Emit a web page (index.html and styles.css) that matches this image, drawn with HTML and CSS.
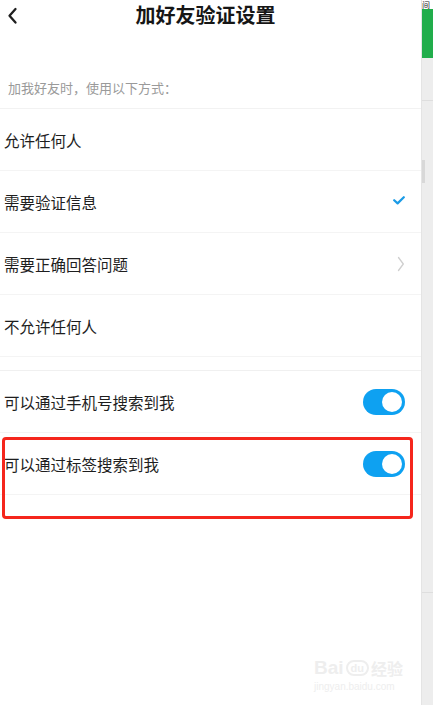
FILE: index.html
```html
<!DOCTYPE html>
<html lang="zh-CN">
<head>
<meta charset="utf-8">
<title>加好友验证设置</title>
<link rel="stylesheet" href="styles.css">
</head>
<body>
<div class="screen">
  <main class="panel">
    <header class="header">
      <span class="back">
        <svg width="12" height="18" viewBox="0 0 12 18"><path d="M8.5 2 L2.5 8.8 L8.5 15.6" fill="none" stroke="#1f1f1f" stroke-width="2.3" stroke-linecap="round" stroke-linejoin="round"/></svg>
      </span>
      <h1 class="title">加好友验证设置</h1>
      <span></span>
    </header>
    <p class="hint">加我好友时，使用以下方式：</p>
    <section class="group">
      <div class="row"><span class="label">允许任何人</span></div>
      <div class="row"><span class="label">需要验证信息</span>
        <svg class="check" width="12" height="9" viewBox="0 0 12 9"><path d="M1.2 4.2 L4.6 7.4 L10.8 1.2" fill="none" stroke="#1b9be6" stroke-width="2.2" stroke-linecap="round" stroke-linejoin="round"/></svg>
      </div>
      <div class="row"><span class="label">需要正确回答问题</span>
        <svg class="arrow" width="8" height="16" viewBox="0 0 8 16"><path d="M1.5 1.5 L6.3 8 L1.5 14.5" fill="none" stroke="#cfcfcf" stroke-width="1.3" stroke-linecap="round" stroke-linejoin="round"/></svg>
      </div>
      <div class="row"><span class="label">不允许任何人</span></div>
    </section>
    <section class="group second">
      <div class="row"><span class="label">可以通过手机号搜索到我</span><span class="toggle"><span class="knob"></span></span></div>
      <div class="row"><span class="label">可以通过标签搜索到我</span><span class="toggle"><span class="knob"></span></span></div>
      <div class="highlight"></div>
    </section>
    <div class="watermark">
      <div class="wm-top"><span class="wm-bai">Bai</span><span class="wm-du">du</span><span class="wm-jy">经验</span></div>
      <div class="wm-url">jingyan.baidu.com</div>
    </div>
  </main>
  <aside class="side">
    <div class="side-green"><span class="side-glyph">间</span></div>
    <div class="side-line one"></div>
    <div class="side-thumb"></div>
    <div class="side-line two"></div>
  </aside>
</div>
</body>
</html>
```

FILE: styles.css
```css
* { box-sizing: border-box; }
html, body { margin: 0; padding: 0; }
body {
  width: 433px;
  height: 705px;
  overflow: hidden;
  background: #fff;
  font-family: "Noto Sans CJK SC", "Noto Sans", sans-serif;
  color: #1c1c1c;
}
.screen {
  display: flex;
  height: 705px;
}
.panel {
  position: relative;
  width: 421px;
  height: 705px;
  background: #fff;
}
.header {
  display: grid;
  grid-template-columns: 60px 1fr 60px;
  align-items: center;
  height: 30px;
  padding-right: 10px;
}
.back {
  display: flex;
  padding-left: 7px;
  padding-top: 2px;
}
.title {
  margin: 0;
  text-align: center;
  font-size: 20px;
  line-height: 28px;
  font-weight: 700;
  color: #161616;
}
.hint {
  margin: 48px 0 0;
  padding: 0 0 10px 8px;
  font-size: 13px;
  line-height: 20px;
  color: #9a9a9a;
  border-bottom: 1px solid #f2f2f2;
}
.group { position: relative; }
.row {
  display: flex;
  align-items: center;
  justify-content: space-between;
  height: 62px;
  padding: 1px 16px 0 4px;
  border-bottom: 1px solid #f4f4f4;
}
.label {
  font-size: 15.5px;
  line-height: 22px;
  color: #1e1e1e;
}
.check { margin-top: -4px; }
.group.second {
  margin-top: 13px;
  border-top: 1px solid #f0f0f0;
}
.toggle {
  position: relative;
  display: block;
  width: 42px;
  height: 26px;
  border-radius: 13px;
  background: #0ea1f1;
}
.knob {
  position: absolute;
  right: 3px;
  top: 3px;
  width: 20px;
  height: 20px;
  border-radius: 50%;
  background: #fff;
}
.highlight {
  position: absolute;
  left: 2px;
  top: 66px;
  width: 411px;
  height: 82px;
  border: 3px solid #f5261c;
  border-radius: 4px;
}
.watermark {
  position: absolute;
  left: 314px;
  top: 655px;
  color: #eeeeee;
  font-family: "Liberation Sans", sans-serif;
}
.wm-top {
  display: flex;
  align-items: center;
  gap: 2px;
  height: 26px;
}
.wm-bai { font-size: 19px; font-weight: 700; }
.wm-du {
  font-size: 11px;
  font-weight: 700;
  border: 2px solid #eeeeee;
  border-radius: 8px;
  padding: 0 3px;
}
.wm-jy {
  font-family: "Noto Sans CJK SC", sans-serif;
  font-size: 16px;
  font-weight: 700;
}
.wm-url { font-size: 10px; line-height: 12px; }
.side {
  position: relative;
  width: 12px;
  height: 705px;
  background: #ededed;
  border-left: 1px solid #e4e4e4;
}
.side-green {
  height: 58px;
  background: #21ad4b;
}
.side-glyph {
  display: block;
  font-size: 8px;
  line-height: 9px;
  color: #222;
  background: #fff;
  width: 11px;
  height: 9px;
}
.side-line {
  position: absolute;
  left: 0;
  right: 0;
  height: 1px;
  background: #dedede;
}
.side-line.one { top: 100px; }
.side-line.two { top: 592px; }
.side-thumb {
  position: absolute;
  left: 0;
  top: 160px;
  width: 3px;
  height: 23px;
  background: #d8d8d8;
}
```
